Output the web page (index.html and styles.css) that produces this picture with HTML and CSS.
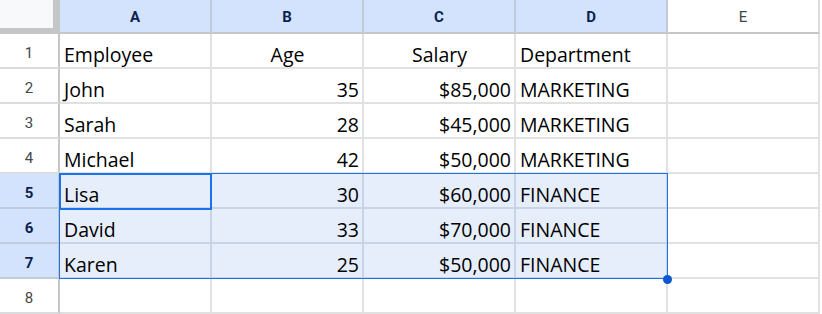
FILE: index.html
```html
<!DOCTYPE html>
<html>
<head>
<meta charset="utf-8">
<link rel="stylesheet" href="styles.css">
</head>
<body>
<div class="sheet">
  <div class="row head">
    <div class="corner"><div class="corner-in"></div></div>
    <div class="ch on">A</div>
    <div class="ch on">B</div>
    <div class="ch on">C</div>
    <div class="ch on">D</div>
    <div class="ch">E</div>
  </div>
  <div class="row">
    <div class="rh">1</div>
    <div class="c">Employee</div>
    <div class="c mid">Age</div>
    <div class="c mid">Salary</div>
    <div class="c">Department</div>
    <div class="c"></div>
  </div>
  <div class="row">
    <div class="rh">2</div>
    <div class="c">John</div>
    <div class="c num">35</div>
    <div class="c num">$85,000</div>
    <div class="c">MARKETING</div>
    <div class="c"></div>
  </div>
  <div class="row">
    <div class="rh">3</div>
    <div class="c">Sarah</div>
    <div class="c num">28</div>
    <div class="c num">$45,000</div>
    <div class="c">MARKETING</div>
    <div class="c"></div>
  </div>
  <div class="row">
    <div class="rh">4</div>
    <div class="c">Michael</div>
    <div class="c num">42</div>
    <div class="c num">$50,000</div>
    <div class="c">MARKETING</div>
    <div class="c"></div>
  </div>
  <div class="row">
    <div class="rh on">5</div>
    <div class="c sel">Lisa</div>
    <div class="c sel num">30</div>
    <div class="c sel num">$60,000</div>
    <div class="c sel">FINANCE</div>
    <div class="c"></div>
  </div>
  <div class="row">
    <div class="rh on">6</div>
    <div class="c sel">David</div>
    <div class="c sel num">33</div>
    <div class="c sel num">$70,000</div>
    <div class="c sel">FINANCE</div>
    <div class="c"></div>
  </div>
  <div class="row">
    <div class="rh on">7</div>
    <div class="c sel">Karen</div>
    <div class="c sel num">25</div>
    <div class="c sel num">$50,000</div>
    <div class="c sel">FINANCE</div>
    <div class="c"></div>
  </div>
  <div class="row">
    <div class="rh">8</div>
    <div class="c"></div>
    <div class="c"></div>
    <div class="c"></div>
    <div class="c"></div>
    <div class="c"></div>
  </div>
  <div class="range"></div>
  <div class="active"></div>
  <div class="handle"></div>
</div>
</body>
</html>
```

FILE: styles.css
```css
* { box-sizing: border-box; }
html, body { margin: 0; padding: 0; background: #fff; overflow: hidden; }
.sheet {
  position: relative;
  width: 822px;
  height: 314px;
  overflow: hidden;
}
.row {
  display: flex;
  height: 35px;
}
.row.head { height: 34px; }
.corner {
  width: 60px;
  height: 34px;
  flex: none;
  background: #c4c7c5;
  border-right: 2px solid #c4c7c5;
}
.corner-in {
  width: 53px;
  height: 28px;
  background: #f8f9fa;
}
.ch {
  width: 152px;
  flex: none;
  border-right: 2px solid #dadcdf;
  border-bottom: 2px solid #c4c7c5;
  display: flex;
  align-items: center;
  justify-content: center;
  font-family: Roboto, "Liberation Sans", sans-serif;
  font-size: 15px;
  color: #444746;
  background: #fff;
  padding-top: 2px;
}
.ch.on {
  background: #d3e3fd;
  color: #0b1f4e;
  font-weight: bold;
  border-right-color: #c2cbd9;
}
.rh {
  width: 60px;
  flex: none;
  border-right: 2px solid #c4c7c5;
  border-bottom: 2px solid #dadcdf;
  display: flex;
  align-items: center;
  justify-content: center;
  font-family: Roboto, "Liberation Sans", sans-serif;
  font-size: 15px;
  color: #444746;
  padding-top: 4px;
}
.rh.on {
  background: #d3e3fd;
  color: #0b1f4e;
  font-weight: bold;
  border-bottom-color: #c2cbd9;
}
.c {
  width: 152px;
  flex: none;
  border-right: 2px solid #e1e1e1;
  border-bottom: 2px solid #e1e1e1;
  display: flex;
  align-items: flex-end;
  padding: 0 3px 1px 4px;
  font-family: "Open Sans", "Noto Sans", sans-serif;
  font-size: 19.5px;
  line-height: 22px;
  color: #000;
  white-space: nowrap;
}
.c.num { justify-content: flex-end; }
.c.mid { justify-content: center; }
.c.sel {
  background: #e6eefc;
  border-color: #c8d3e6;
}
.range {
  position: absolute;
  left: 59px;
  top: 173px;
  width: 609px;
  height: 106px;
  border: 1px solid #1a73e8;
}
.active {
  position: absolute;
  left: 59px;
  top: 173px;
  width: 153px;
  height: 37px;
  border: 2px solid #1a73e8;
}
.handle {
  position: absolute;
  left: 663px;
  top: 275px;
  width: 9px;
  height: 9px;
  border-radius: 50%;
  background: #0b57d0;
}
```
